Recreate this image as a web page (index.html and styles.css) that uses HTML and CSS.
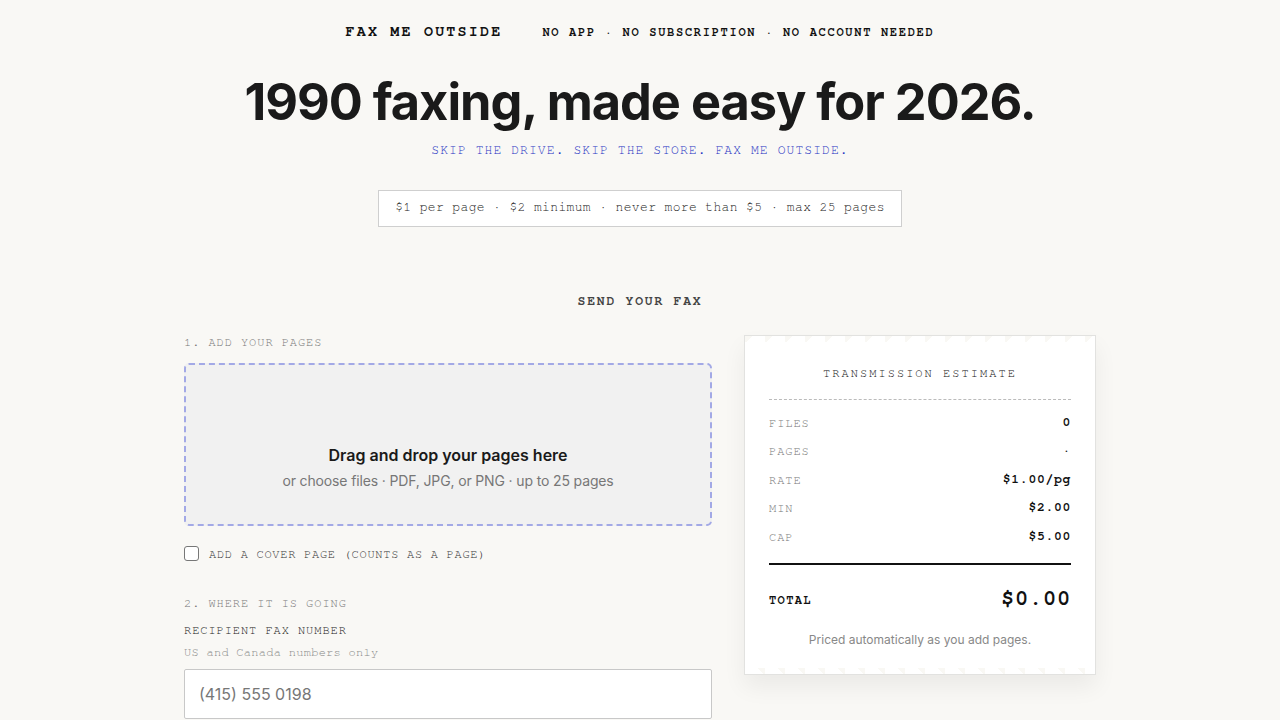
FILE: index.html
```html
<!DOCTYPE html>
<html>
  <head>
    <title>Fax Me Outside</title>
    <link rel="stylesheet" href="styles.css">
  </head>
  <body>
    <div class="topbar">
      <div class="brand">FAX ME OUTSIDE</div>
      <div class="tagline">NO APP &middot; NO SUBSCRIPTION &middot; NO ACCOUNT NEEDED</div>
    </div>

    <div class="hero">
      <h1>1990 faxing, made easy for 2026.</h1>
      <p class="subtitle">SKIP THE DRIVE. SKIP THE STORE. FAX ME OUTSIDE.</p>
      <div class="pricing">$1 per page &middot; $2 minimum &middot; never more than $5 &middot; max 25 pages</div>
    </div>

    <div class="send">
      <h2 class="send-title">SEND YOUR FAX</h2>

      <div class="columns">
        <div class="form">
          <div class="step">1. ADD YOUR PAGES</div>
          <div class="dropzone">
            <div class="drop-title">Drag and drop your pages here</div>
            <div class="drop-sub">or choose files &middot; PDF, JPG, or PNG &middot; up to 25 pages</div>
          </div>

          <label class="cover">
            <span class="checkbox"></span>
            ADD A COVER PAGE (COUNTS AS A PAGE)
          </label>

          <div class="step">2. WHERE IT IS GOING</div>
          <div class="field-label">RECIPIENT FAX NUMBER</div>
          <div class="field-hint">US and Canada numbers only</div>
          <input class="fax-input" type="text" placeholder="(415) 555 0198">
        </div>

        <div class="receipt">
          <div class="receipt-title">TRANSMISSION ESTIMATE</div>
          <div class="rows">
            <div class="row"><span class="label">FILES</span><span class="value">0</span></div>
            <div class="row"><span class="label">PAGES</span><span class="value">&middot;</span></div>
            <div class="row"><span class="label">RATE</span><span class="value">$1.00/pg</span></div>
            <div class="row"><span class="label">MIN</span><span class="value">$2.00</span></div>
            <div class="row"><span class="label">CAP</span><span class="value">$5.00</span></div>
          </div>
          <div class="total">
            <span class="total-label">TOTAL</span>
            <span class="total-value">$0.00</span>
          </div>
          <p class="receipt-note">Priced automatically as you add pages.</p>
        </div>
      </div>
    </div>
  </body>
</html>
```

FILE: styles.css
```css
body {
  margin: 0;
  font-family: Inter, "Noto Sans", sans-serif;
  background-color: #f9f8f5;
  color: #1a1a1a;
}

.topbar,
.subtitle,
.pricing,
.send-title,
.step,
.field-label,
.field-hint,
.cover,
.receipt-title,
.row,
.total {
  font-family: "Nimbus Mono PS", "Nimbus Mono L", FreeMono, "Courier New", Courier, "Liberation Mono", monospace;
  line-height: 16px;
}

.topbar {
  display: flex;
  justify-content: center;
  align-items: center;
  gap: 40px;
  padding-top: 24px;
  font-weight: bold;
  color: #111;
}

.brand {
  font-size: 15px;
  letter-spacing: 2.2px;
}

.tagline {
  font-size: 12px;
  letter-spacing: 1.71px;
}

.hero {
  text-align: center;
}

h1 {
  margin: 37px 0 0;
  font-size: 50.5px;
  font-weight: 700;
  letter-spacing: -0.02em;
  line-height: 1;
}

.subtitle {
  margin: 15px 0 0;
  font-size: 13px;
  letter-spacing: 1.08px;
  color: #1d31c2;
}

.pricing {
  display: inline-block;
  margin-top: 31px;
  padding: 9px 16px 10px;
  background-color: #fff;
  border: 1px solid #cfcfcf;
  font-size: 13px;
  letter-spacing: 0.36px;
  color: #222;
}

.send {
  max-width: 912px;
  margin: 0 auto;
  padding-top: 67px;
}

.send-title {
  margin: 0 0 24px;
  text-align: center;
  font-size: 13px;
  letter-spacing: 1.8px;
  color: #444;
}

.columns {
  display: grid;
  grid-template-columns: 528px 352px;
  gap: 32px;
  align-items: start;
}

.step,
.field-label,
.cover {
  font-size: 12px;
  letter-spacing: 0.94px;
  color: #777;
}

.dropzone {
  height: 159px;
  margin-top: 13px;
  display: flex;
  flex-direction: column;
  justify-content: flex-end;
  align-items: center;
  gap: 7px;
  background-color: #f1f1f1;
  border: 2px dashed #a3a9e6;
  border-radius: 5px;
}

.drop-title {
  font-size: 16px;
  font-weight: 600;
}

.drop-sub {
  margin-bottom: 35px;
  font-size: 14px;
  letter-spacing: -0.01em;
  color: #777;
}

.cover {
  display: flex;
  align-items: center;
  gap: 10px;
  margin: 20px 0 33px;
  color: #333;
  letter-spacing: 0.72px;
}

.checkbox {
  width: 13px;
  height: 13px;
  border: 1px solid #777;
  border-radius: 3px;
  background-color: #fff;
}

.field-label {
  margin-top: 11px;
  color: #222;
}

.field-hint {
  margin-top: 6px;
  font-size: 12px;
  letter-spacing: 0.28px;
  color: #888;
}

.fax-input {
  display: block;
  box-sizing: border-box;
  width: 100%;
  height: 50px;
  margin-top: 9px;
  padding: 0 14px;
  border: 1px solid #c8c8c8;
  border-radius: 2px;
  background-color: #fff;
  font-family: Inter, sans-serif;
  font-size: 16px;
}

.fax-input::placeholder {
  color: #777;
}

.receipt {
  margin-top: 1px;
  padding: 29px 24px 27px;
  background-color: #fff;
  border: 1px solid #e2e2e0;
  box-shadow: 0 12px 22px rgba(0, 0, 0, 0.06);
  background-image:
    linear-gradient(135deg, #f9f8f4 30%, transparent 30%),
    linear-gradient(45deg, transparent 70%, #f9f8f4 70%);
  background-size: 20px 6px, 20px 6px;
  background-position: 0 0, 0 100%;
  background-repeat: repeat-x;
}

.receipt-title {
  text-align: center;
  font-size: 12px;
  letter-spacing: 2.04px;
  color: #111;
  padding-bottom: 18px;
  border-bottom: 1px dashed #bbb;
}

.rows {
  padding: 9px 0 12px;
  border-bottom: 2px solid #111;
}

.row {
  display: flex;
  justify-content: space-between;
  align-items: center;
  height: 28.5px;
}

.label {
  font-size: 12px;
  letter-spacing: 0.94px;
  color: #777;
}

.value {
  font-size: 13px;
  font-weight: bold;
  letter-spacing: 0.72px;
  color: #111;
}

.total {
  display: flex;
  justify-content: space-between;
  align-items: center;
  padding-top: 21px;
  font-weight: bold;
  color: #111;
}

.total-label {
  font-size: 12px;
  letter-spacing: 1.38px;
  padding-top: 4px;
}

.total-value {
  font-size: 22px;
  letter-spacing: 0.8px;
  line-height: 24px;
}

.receipt-note {
  margin: 22px 0 0;
  text-align: center;
  font-size: 12px;
  color: #888;
}
```
